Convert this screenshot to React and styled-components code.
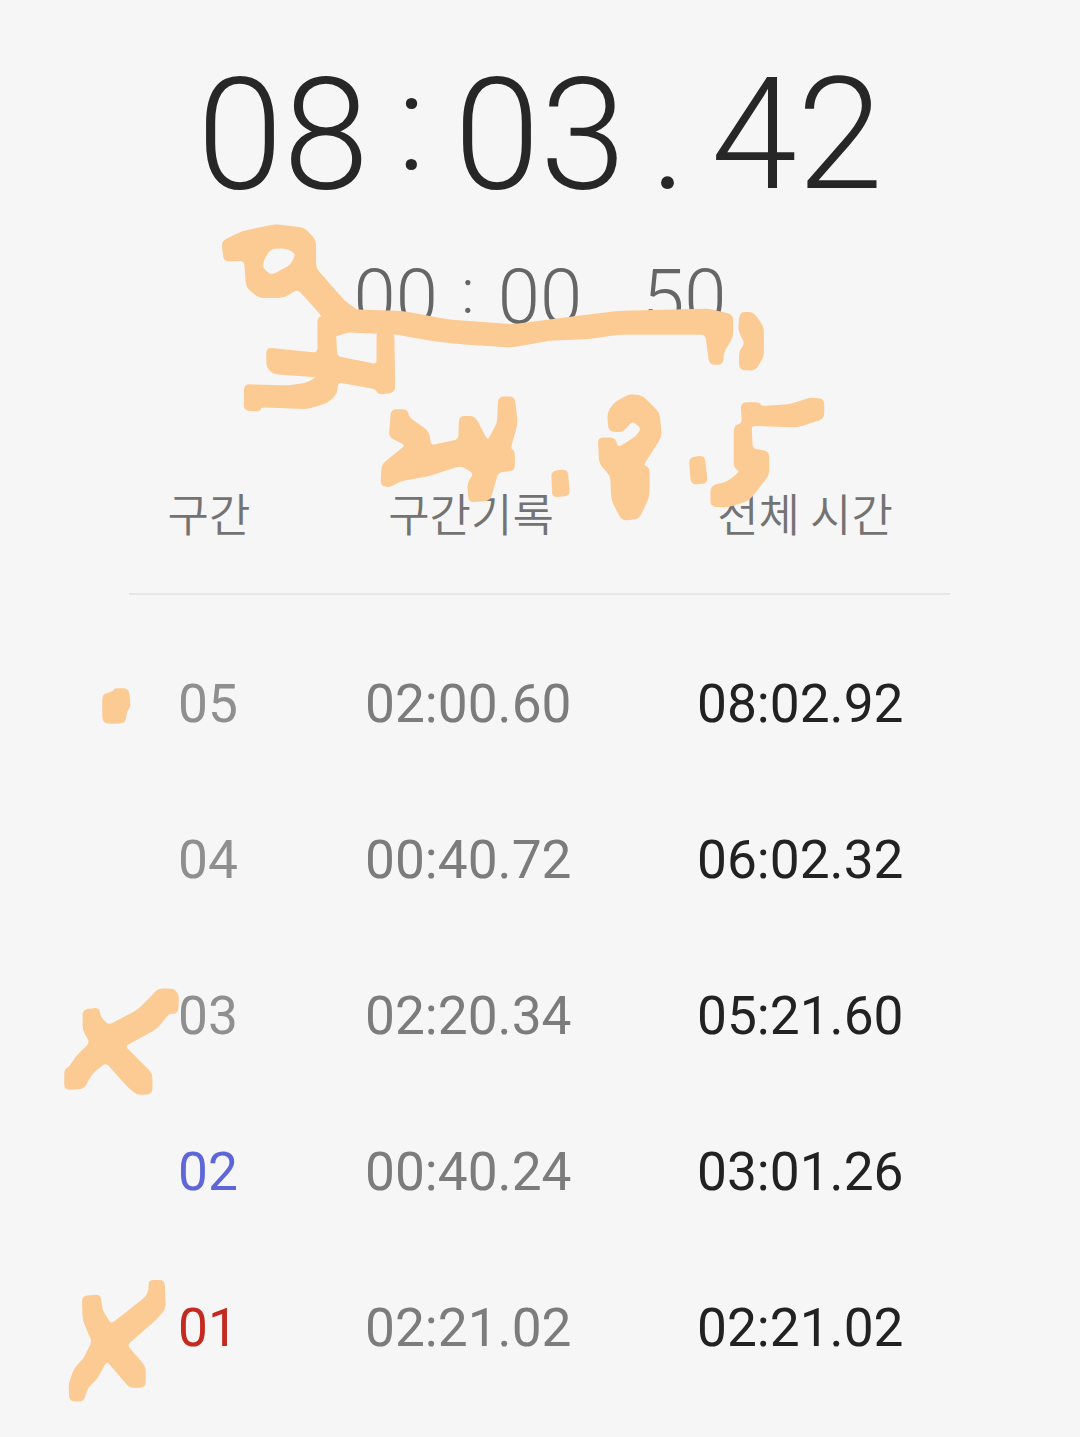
import React from "react";
import styled, { createGlobalStyle } from "styled-components";

const Global = createGlobalStyle`
  html, body { margin: 0; padding: 0; background: #f6f6f6; }
`;

const Page = styled.div`
  position: relative;
  width: 1080px;
  height: 1437px;
  overflow: hidden;
  background: #f6f6f6;
  font-family: Roboto, "Noto Sans CJK KR", sans-serif;
`;

const MainTime = styled.div`
  display: flex;
  justify-content: center;
  align-items: baseline;
  padding-top: 43px;
  height: 188px;
  box-sizing: border-box;
  font-size: 155px;
  line-height: 185px;
  font-weight: 300;
  color: #272727;
`;

const LapTime = styled.div`
  display: flex;
  justify-content: center;
  align-items: baseline;
  margin-top: 67px;
  height: 84px;
  font-size: 76px;
  line-height: 84px;
  font-weight: 300;
  color: #666666;
`;

/* separators sit in a fixed slot; the colon glyph is smaller and raised, as on the device */
const Sep = styled.span`
  width: ${(p) => p.$w}px;
  text-align: center;
  font-size: ${(p) => p.$size || "inherit"};
  font-weight: ${(p) => p.$weight || "inherit"};
  transform: translateY(${(p) => p.$lift || 0}px);
`;

const Head = styled.div`
  display: grid;
  grid-template-columns: 160px 364px 304px;
  margin-top: 144px;
  padding-left: 129px;
  font-size: 45px;
  line-height: 60px;
  font-weight: 350;
  color: #737373;
  text-align: center;
  font-family: "Noto Sans CJK KR", sans-serif;
`;

const Divider = styled.div`
  height: 2px;
  margin: 50px 130px 0 129px;
  background: #e6e6e6;
`;

const Rows = styled.div`
  margin-top: 31px;
`;

const Row = styled.div`
  display: grid;
  grid-template-columns: 187px 332px auto;
  height: 156px;
  padding-left: 178px;
  align-items: center;
  font-size: 53.25px;
  line-height: 156px;
  font-weight: 400;
`;

const LapNo = styled.span`
  color: ${(p) => p.$color};
`;
const Split = styled.span`
  color: #7c7c7c;
`;
const Total = styled.span`
  color: #222222;
`;

const Ink = styled.svg`
  position: absolute;
  inset: 0;
  width: 1080px;
  height: 1437px;
  pointer-events: none;
`;

const rows = [
  ["05", "02:00.60", "08:02.92", "#8f8f8f"],
  ["04", "00:40.72", "06:02.32", "#8f8f8f"],
  ["03", "02:20.34", "05:21.60", "#8f8f8f"],
  ["02", "00:40.24", "03:01.26", "#5e66d8"],
  ["01", "02:21.02", "02:21.02", "#c42a20"],
];

/* marker scribble outlines, traced in crop coordinates, with each corner softly rounded */
const trace = (pts, ox, oy, sx, sy) => {
  const p = pts.map(([x, y]) => [ox + x / sx, oy + y / sy]);
  const toward = (a, b) => {
    const dist = Math.hypot(b[0] - a[0], b[1] - a[1]);
    const t = Math.min(0.35, 5 / (dist || 1));
    return [a[0] + (b[0] - a[0]) * t, a[1] + (b[1] - a[1]) * t];
  };
  const f = (q) => `${q[0].toFixed(1)} ${q[1].toFixed(1)}`;
  let d = "";
  p.forEach((q, i) => {
    const prev = p[(i - 1 + p.length) % p.length];
    const next = p[(i + 1) % p.length];
    d += `${i ? " L" : "M"}${f(toward(q, prev))} Q${f(q)} ${f(toward(q, next))}`;
  });
  return d + " Z";
};

const top = (pts) => trace(pts, 210, 210, 2.45, 3);
const bottom = (pts) => trace(pts, 50, 960, 3, 3);

const scribbles = [
  top([[30,95],[80,65],[160,45],[230,55],[258,90],[258,175],[330,275],[365,305],[300,360],[270,310],[215,235],[180,262],[120,262],[90,230],[85,150],[35,152]]) +
    " " +
    top([[130,150],[148,115],[185,112],[212,130],[200,165],[150,198],[128,175]]),
  top([[330,300],[470,305],[580,330],[740,345],[900,320],[1000,305],[1220,298],[1280,315],[1280,380],[1258,425],[1255,462],[1225,462],[1215,372],[1000,372],[930,385],[830,390],[740,410],[630,402],[550,392],[460,372],[340,365],[300,380]]),
  top([[1300,308],[1330,308],[1355,350],[1355,440],[1335,480],[1298,478],[1298,425],[1312,400],[1295,360]]),
  top([[265,320],[305,320],[310,440],[410,465],[410,365],[450,370],[452,545],[415,552],[405,535],[312,515],[310,550],[290,575],[240,595],[125,590],[120,602],[85,600],[85,525],[190,528],[240,520],[265,500],[155,490],[140,470],[140,415],[180,420],[265,430]]),
  top([[445,600],[482,600],[488,625],[535,665],[540,708],[610,690],[612,620],[648,620],[680,695],[705,640],[708,562],[745,562],[752,640],[735,715],[745,725],[745,780],[705,785],[685,870],[635,875],[632,820],[648,790],[615,765],[540,795],[465,812],[440,830],[420,825],[422,765],[482,705],[440,680]]),
  top([[838,785],[875,780],[880,855],[840,860]]),
  top([[975,610],[990,580],[1030,553],[1060,560],[1100,610],[1105,680],[1060,765],[1075,775],[1075,860],[1050,925],[1010,930],[985,870],[982,795],[955,760],[952,685],[990,685],[1000,715],[1045,680],[1058,655],[1035,630],[1010,665],[978,662]]),
  top([[1175,745],[1210,738],[1218,818],[1180,822]]),
  top([[1302,580],[1345,578],[1350,590],[1420,585],[1470,565],[1503,568],[1503,625],[1440,650],[1325,645],[1328,718],[1368,725],[1368,795],[1320,870],[1270,890],[1228,888],[1228,830],[1270,815],[1300,785],[1285,770],[1285,650],[1305,640]]),
  trace([[103,695],[113,692],[115,689],[128,689],[130,706],[126,712],[125,721],[120,723],[106,723],[103,719]], 0, 0, 1, 1),
  bottom([[325,88],[370,88],[385,105],[382,158],[355,160],[320,205],[222,258],[305,342],[305,400],[262,403],[235,380],[168,305],[125,340],[100,385],[45,388],[45,330],[60,320],[80,290],[122,248],[100,210],[100,150],[145,145],[150,170],[175,198],[265,150],[300,115]]),
  bottom([[298,962],[342,962],[345,1045],[320,1075],[228,1155],[285,1220],[285,1280],[240,1282],[170,1200],[140,1255],[110,1285],[100,1322],[60,1322],[58,1270],[75,1225],[100,1200],[128,1145],[100,1080],[98,1010],[150,1005],[155,1050],[183,1095],[290,1010],[298,990]]),
];

export default function App() {
  return (
    <Page>
      <Global />
      <MainTime>
        <span>08</span>
        <Sep $w={85} $size="136px" $lift={-19} $weight={300}>:</Sep>
        <span>03</span>
        <Sep $w={85}>.</Sep>
        <span>42</span>
      </MainTime>
      <LapTime>
        <span>00</span>
        <Sep $w={60} $size="63px" $lift={-10} $weight={300}>:</Sep>
        <span>00</span>
        <Sep $w={60}>.</Sep>
        <span>50</span>
      </LapTime>
      <Head>
        <span>구간</span>
        <span>구간기록</span>
        <span>전체 시간</span>
      </Head>
      <Divider />
      <Rows>
        {rows.map(([n, s, t, c]) => (
          <Row key={n}>
            <LapNo $color={c}>{n}</LapNo>
            <Split>{s}</Split>
            <Total>{t}</Total>
          </Row>
        ))}
      </Rows>
      <Ink viewBox="0 0 1080 1437">
        <g fill="#fccb94" stroke="#fccb94" strokeWidth="1.5" strokeLinejoin="round" fillRule="evenodd">
          {scribbles.map((d, i) => (
            <path key={i} d={d} />
          ))}
        </g>
      </Ink>
    </Page>
  );
}
